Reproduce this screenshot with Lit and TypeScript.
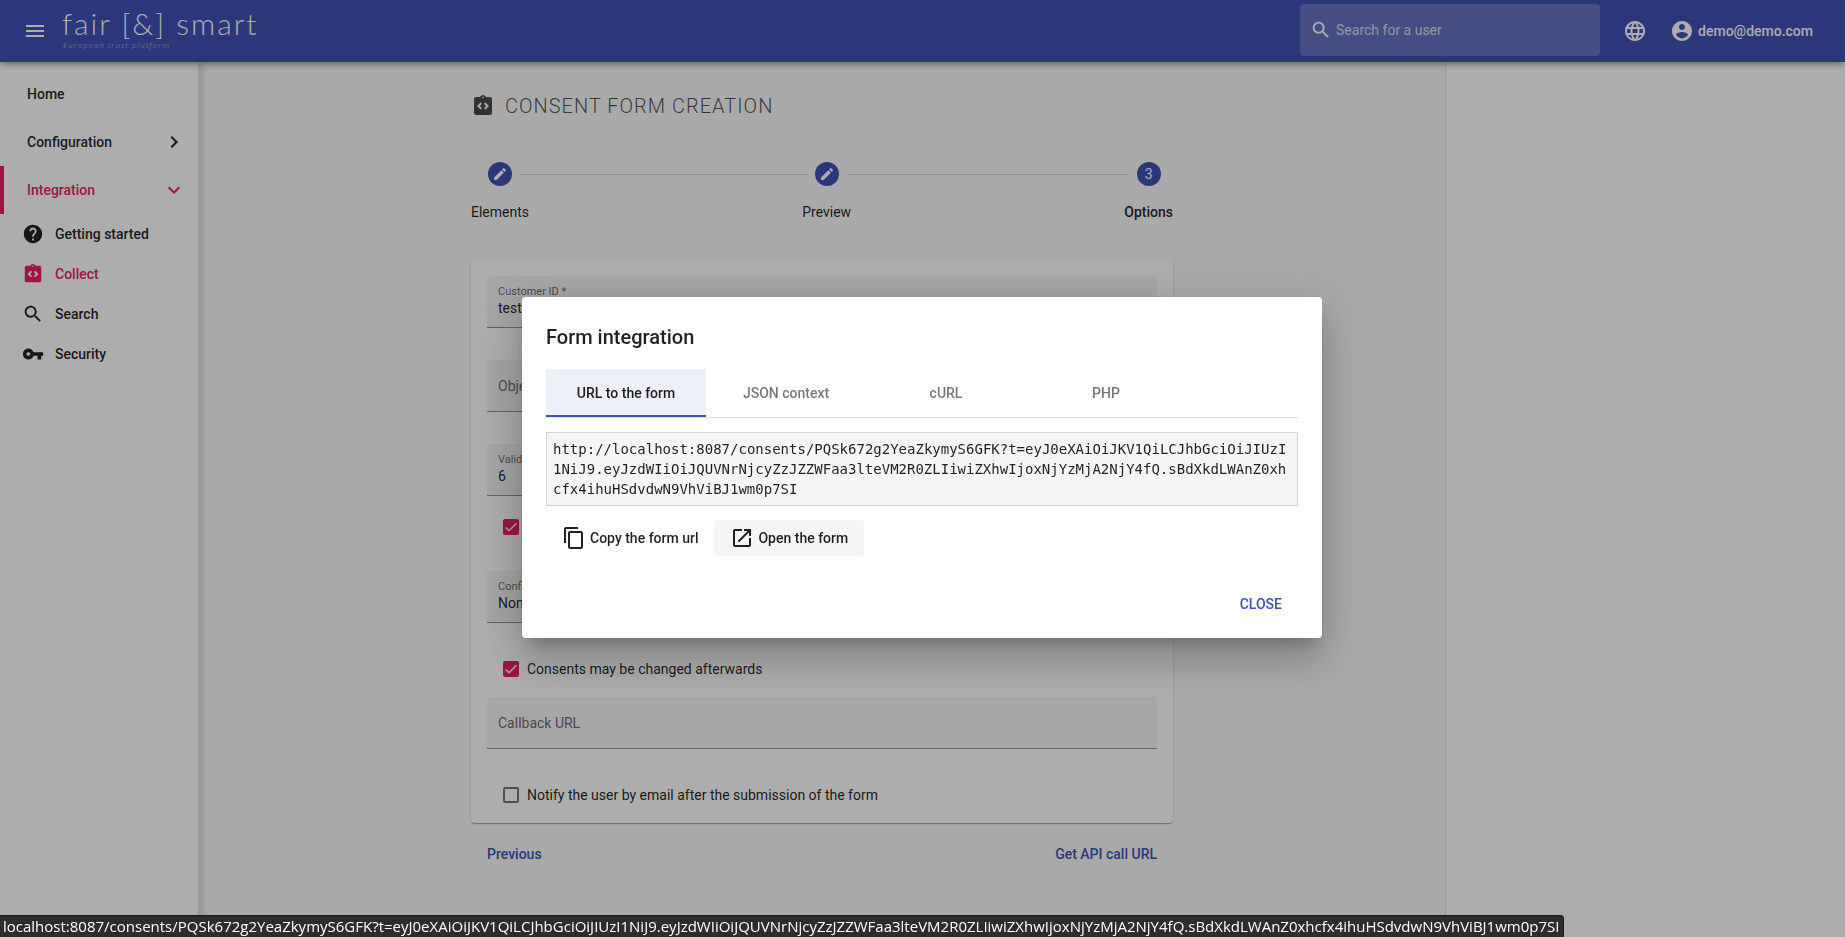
import { LitElement, html, css, svg } from "lit";
import { customElement, state } from "lit/decorators.js";
import { classMap } from "lit/directives/class-map.js";

const ICONS: Record<string, string> = {
  menu: "M3 18h18v-2H3v2zm0-5h18v-2H3v2zm0-7v2h18V6H3z",
  search:
    "M15.5 14h-.79l-.28-.27C15.41 12.59 16 11.11 16 9.5 16 5.91 13.09 3 9.5 3S3 5.91 3 9.5 5.91 16 9.5 16c1.61 0 3.09-.59 4.23-1.57l.27.28v.79l5 4.99L20.49 19l-4.99-5zm-6 0C7.01 14 5 11.99 5 9.5S7.01 5 9.5 5 14 7.01 14 9.5 11.99 14 9.5 14z",
  globe:
    "M11.99 2C6.47 2 2 6.48 2 12s4.47 10 9.99 10C17.52 22 22 17.52 22 12S17.52 2 11.99 2zm6.93 6h-2.95c-.32-1.25-.78-2.45-1.38-3.56 1.84.63 3.37 1.91 4.33 3.56zM12 4.04c.83 1.2 1.48 2.53 1.91 3.96h-3.82c.43-1.43 1.08-2.76 1.91-3.96zM4.26 14C4.1 13.36 4 12.69 4 12s.1-1.36.26-2h3.38c-.08.66-.14 1.32-.14 2s.06 1.34.14 2H4.26zm.82 2h2.95c.32 1.25.78 2.45 1.38 3.56-1.84-.63-3.37-1.9-4.33-3.56zm2.95-8H5.08c.96-1.66 2.49-2.93 4.33-3.56C8.81 5.55 8.35 6.75 8.03 8zM12 19.96c-.83-1.2-1.48-2.53-1.91-3.96h3.82c-.43 1.43-1.08 2.76-1.91 3.96zM14.34 14H9.66c-.09-.66-.16-1.32-.16-2s.07-1.35.16-2h4.68c.09.65.16 1.32.16 2s-.07 1.34-.16 2zm.25 5.56c.6-1.11 1.06-2.31 1.38-3.56h2.95c-.96 1.65-2.49 2.93-4.33 3.56zM16.36 14c.08-.66.14-1.32.14-2s-.06-1.34-.14-2h3.38c.16.64.26 1.31.26 2s-.1 1.36-.26 2h-3.38z",
  account:
    "M12 2C6.48 2 2 6.48 2 12s4.48 10 10 10 10-4.48 10-10S17.52 2 12 2zm0 3c1.66 0 3 1.34 3 3s-1.34 3-3 3-3-1.34-3-3 1.34-3 3-3zm0 14.2c-2.5 0-4.71-1.28-6-3.22.03-1.99 4-3.08 6-3.08 1.99 0 5.97 1.09 6 3.08-1.29 1.94-3.5 3.22-6 3.22z",
  right: "M10 6L8.59 7.41 13.17 12l-4.58 4.59L10 18l6-6z",
  down: "M16.59 8.59L12 13.17 7.41 8.59 6 10l6 6 6-6z",
  help: "M12 2C6.48 2 2 6.48 2 12s4.48 10 10 10 10-4.48 10-10S17.52 2 12 2zm1 17h-2v-2h2v2zm2.07-7.75l-.9.92C13.45 12.9 13 13.5 13 15h-2v-.5c0-1.1.45-2.1 1.17-2.83l1.24-1.26c.37-.36.59-.86.59-1.41 0-1.1-.9-2-2-2s-2 .9-2 2H8c0-2.21 1.79-4 4-4s4 1.79 4 4c0 .88-.36 1.68-.93 2.25z",
  form: "M19 3h-4.18C14.4 1.84 13.3 1 12 1s-2.4.84-2.82 2H5c-1.1 0-2 .9-2 2v14c0 1.1.9 2 2 2h14c1.1 0 2-.9 2-2V5c0-1.1-.9-2-2-2zM11 14.17L9.59 15.6 6 12l3.59-3.6L11 9.83 8.83 12 11 14.17zM12 4.25c-.41 0-.75-.34-.75-.75s.34-.75.75-.75.75.34.75.75-.34.75-.75.75zm2.41 11.35L13 14.17 15.17 12 13 9.83l1.41-1.43L18 12l-3.59 3.6z",
  key: "M12.65 10C11.83 7.67 9.61 6 7 6c-3.31 0-6 2.69-6 6s2.69 6 6 6c2.61 0 4.83-1.67 5.65-4H17v4h4v-4h2v-4H12.65zM7 14c-1.1 0-2-.9-2-2s.9-2 2-2 2 .9 2 2-.9 2-2 2z",
  edit: "M3 17.25V21h3.75L17.81 9.94l-3.75-3.75L3 17.25zM20.71 7.04c.39-.39.39-1.02 0-1.41l-2.34-2.34c-.39-.39-1.02-.39-1.41 0l-1.83 1.83 3.75 3.75 1.83-1.83z",
  copy: "M16 1H4c-1.1 0-2 .9-2 2v14h2V3h12V1zm3 4H8c-1.1 0-2 .9-2 2v14c0 1.1.9 2 2 2h11c1.1 0 2-.9 2-2V7c0-1.1-.9-2-2-2zm0 16H8V7h11v14z",
  open: "M19 19H5V5h7V3H5c-1.11 0-2 .9-2 2v14c0 1.1.89 2 2 2h14c1.1 0 2-.9 2-2v-7h-2v7zM14 3v2h3.59l-9.83 9.83 1.41 1.41L19 6.41V10h2V3h-7z",
};

const icon = (name: string, size = "") => html`
  <svg class="icon ${size}" viewBox="0 0 24 24" aria-hidden="true">
    ${svg`<path d=${ICONS[name]}></path>`}
  </svg>`;

const TOKEN_PATH =
  "localhost:8087/consents/PQSk672g2YeaZkymyS6GFK?t=eyJ0eXAiOiJKV1QiLCJhbGciOiJIUzI1NiJ9.eyJzdWIiOiJQUVNrNjcyZzJZZWFaa3lteVM2R0ZLIiwiZXhwIjoxNjYzMjA2NjY4fQ.sBdXkdLWAnZ0xhcfx4ihuHSdvdwN9VhViBJ1wm0p7SI";

const TABS = ["URL to the form", "JSON context", "cURL", "PHP"];

@customElement("app-root")
export class AppRoot extends LitElement {
  @state() private tab = 0;
  @state() private dialogOpen = true;

  static styles = css`
    :host {
      --primary: #3f51b5;
      --accent: #e91e63;
      display: flex;
      flex-direction: column;
      min-height: 100vh;
      font: 400 14px/20px Roboto, sans-serif;
      color: rgba(0, 0, 0, 0.87);
      background: #fafafa;
    }
    * {
      box-sizing: border-box;
    }
    button,
    input,
    select {
      font: inherit;
      color: inherit;
      border: 0;
      background: none;
      padding: 0;
      margin: 0;
      outline: 0;
    }
    a {
      color: inherit;
      text-decoration: none;
    }
    .icon {
      display: block;
      flex: none;
      width: 24px;
      height: 24px;
      fill: currentColor;
    }
    .icon.medium {
      width: 22px;
      height: 22px;
    }
    .icon.small {
      width: 16px;
      height: 16px;
    }

    .toolbar {
      display: flex;
      align-items: center;
      height: 62px;
      padding: 0 32px 0 23px;
      color: #fff;
      background: var(--primary);
      z-index: 2;
      box-shadow: 0 2px 4px -1px rgba(0, 0, 0, 0.2),
        0 4px 5px 0 rgba(0, 0, 0, 0.14), 0 1px 10px 0 rgba(0, 0, 0, 0.12);
    }
    .brand {
      display: flex;
      flex-direction: column;
      margin-left: 15px;
      padding-bottom: 4px;
    }
    .brand-name {
      font: 300 30px/32px Lato, sans-serif;
      letter-spacing: 2px;
    }
    .brand-tag {
      font: italic 300 8px/12px "Open Sans", sans-serif;
      letter-spacing: 1px;
      padding-left: 1px;
      opacity: 0.6;
    }
    .user-search {
      display: flex;
      align-items: center;
      gap: 4px;
      width: 300px;
      height: 52px;
      margin: 0 23px 2px auto;
      padding: 0 10px;
      border-radius: 4px;
      background: rgba(255, 255, 255, 0.2);
    }
    .user-search input {
      flex: 1;
      min-width: 0;
      opacity: 0.75;
    }
    .user-search input::placeholder {
      color: #fff;
      opacity: 1;
    }
    .account {
      display: flex;
      align-items: center;
      gap: 4px;
      margin-left: 23px;
      font-weight: 500;
    }

    .body {
      display: flex;
      flex: 1;
    }
    .sidebar {
      flex: none;
      width: 198px;
      padding-top: 8px;
      background: #fff;
      font-weight: 500;
      box-shadow: 6px 0 4px rgba(0, 0, 0, 0.1);
    }
    .nav-item {
      display: flex;
      align-items: center;
      justify-content: space-between;
      height: 48px;
      padding: 0 12px 0 23px;
      border-left: 4px solid transparent;
    }
    .nav-item.active {
      color: var(--accent);
      border-color: var(--accent);
    }
    .nav-sub {
      display: flex;
      align-items: center;
      gap: 11px;
      height: 40px;
      padding-left: 22px;
    }
    .nav-sub.active {
      color: var(--accent);
    }

    .main {
      flex: 1;
      min-width: 0;
      padding: 32px 24px 32px 25px;
    }
    .side-panel {
      flex: none;
      width: 400px;
      background: #fff;
      border-left: 1px solid rgba(0, 0, 0, 0.12);
    }
    .content {
      max-width: 702px;
      margin: 0 auto;
    }
    .title {
      display: flex;
      align-items: center;
      gap: 10px;
      margin: 0 0 44px;
      font: 300 20px/24px Roboto, sans-serif;
      letter-spacing: 1px;
      color: rgba(0, 0, 0, 0.7);
    }

    .stepper {
      display: flex;
    }
    .step {
      display: flex;
      flex-direction: column;
      gap: 16px;
    }
    .step.current {
      font-weight: 500;
    }
    .step-top {
      display: flex;
      align-items: center;
      gap: 8px;
      align-self: stretch;
    }
    .step-dot {
      display: grid;
      place-items: center;
      width: 24px;
      height: 24px;
      border-radius: 50%;
      color: #fff;
      background: var(--primary);
      font-weight: 400;
    }
    .line {
      flex: 1;
      height: 1px;
      background: rgba(0, 0, 0, 0.14);
    }
    .line.blank {
      background: none;
    }
    .stepper > .line {
      margin-top: 12px;
    }

    .card {
      display: flex;
      flex-direction: column;
      gap: 32px;
      margin-top: 38px;
      padding: 16px;
      border-radius: 4px;
      background: #fff;
      box-shadow: 0 2px 1px -1px rgba(0, 0, 0, 0.2),
        0 1px 1px 0 rgba(0, 0, 0, 0.14), 0 1px 3px 0 rgba(0, 0, 0, 0.12);
    }
    .group {
      display: flex;
      flex-direction: column;
      gap: 19px;
    }
    .group.check-first {
      gap: 16px;
      padding-top: 2px;
    }
    .field {
      display: flex;
      flex-direction: column;
      justify-content: center;
      height: 52px;
      padding: 0 11px;
      border-radius: 4px 4px 0 0;
      border-bottom: 1px solid rgba(0, 0, 0, 0.42);
      background: rgba(0, 0, 0, 0.04);
    }
    .field label {
      font-size: 11px;
      line-height: 12px;
      color: rgba(0, 0, 0, 0.6);
    }
    .field input,
    .field select {
      width: 100%;
      height: 20px;
      appearance: none;
    }
    .field input::placeholder {
      color: rgba(0, 0, 0, 0.6);
      opacity: 1;
    }
    .check {
      display: flex;
      align-items: center;
      gap: 8px;
      height: 24px;
      padding-left: 16px;
    }
    .check input {
      appearance: none;
      width: 16px;
      height: 16px;
      border: 2px solid rgba(0, 0, 0, 0.54);
      border-radius: 2px;
    }
    .check input:checked {
      border: 0;
      background: var(--accent)
        url("data:image/svg+xml,%3Csvg xmlns='http://www.w3.org/2000/svg' viewBox='0 0 24 24'%3E%3Cpath d='M4.1 12.7 9 17.6 20.3 6.3' fill='none' stroke='white' stroke-width='2.2'/%3E%3C/svg%3E")
        center / 16px no-repeat;
    }
    .card-actions {
      display: flex;
      justify-content: space-between;
      padding: 21px 16px;
      color: var(--primary);
      font-weight: 500;
    }
    .card-actions button,
    .close {
      font-weight: 500;
    }

    .backdrop {
      position: fixed;
      inset: 0;
      z-index: 10;
      display: flex;
      align-items: center;
      justify-content: center;
      padding: 0 1px 2px 0;
      background: rgba(0, 0, 0, 0.32);
    }
    .dialog {
      width: 800px;
      max-width: 80vw;
      padding: 24px 24px 16px;
      border-radius: 4px;
      background: #fff;
      box-shadow: 0 11px 15px -7px rgba(0, 0, 0, 0.2),
        0 24px 38px 3px rgba(0, 0, 0, 0.14), 0 9px 46px 8px rgba(0, 0, 0, 0.12);
    }
    .dialog-title {
      margin: 0 0 16px;
      font: 500 20px/32px Roboto, sans-serif;
    }
    .tabs {
      display: flex;
      border-bottom: 1px solid rgba(0, 0, 0, 0.12);
    }
    .tab {
      width: 160px;
      height: 48px;
      padding-top: 2px;
      border-bottom: 2px solid transparent;
      font-weight: 500;
      color: rgba(0, 0, 0, 0.54);
    }
    .tab.selected {
      color: rgba(0, 0, 0, 0.87);
      background: #eceef8;
      border-color: var(--primary);
    }
    .code {
      display: block;
      margin: 14px 0;
      padding: 6px;
      border: 1px solid #d3d3d3;
      background: #f5f5f5;
      font: 14px/20px "DejaVu Sans Mono", monospace;
      word-break: break-all;
    }
    .links {
      display: flex;
    }
    .link {
      display: flex;
      align-items: center;
      gap: 4px;
      height: 36px;
      padding: 0 16px;
      border-radius: 4px;
      font-weight: 500;
    }
    .link.hover {
      background: #f5f5f5;
    }
    .dialog-actions {
      display: flex;
      justify-content: flex-end;
      margin-top: 30px;
    }
    .close {
      height: 36px;
      padding: 0 16px;
      color: var(--primary);
    }

    .status {
      position: fixed;
      left: 0;
      bottom: 0;
      z-index: 11;
      height: 22px;
      padding: 0 4px 0 3px;
      border-top: 1px solid #1a1a1a;
      border-right: 1px solid #1a1a1a;
      border-radius: 0 4px 0 0;
      color: #fff;
      background: #2d2d2d;
      font: 15px/20px "Open Sans", sans-serif;
      white-space: nowrap;
    }
  `;

  private renderDialog() {
    return html`
      <div class="backdrop">
        <section class="dialog" role="dialog" aria-modal="true" aria-labelledby="dialog-title">
          <h2 class="dialog-title" id="dialog-title">Form integration</h2>
          <div class="tabs" role="tablist">
            ${TABS.map(
              (t, i) => html`<button
                role="tab"
                aria-selected=${i === this.tab}
                class=${classMap({ tab: true, selected: i === this.tab })}
                @click=${() => (this.tab = i)}
              >${t}</button>`
            )}
          </div>
          <code class="code">http://${TOKEN_PATH}</code>
          <div class="links">
            <button class="link">${icon("copy")}Copy the form url</button>
            <a class="link hover" href="http://${TOKEN_PATH}">${icon("open")}Open the form</a>
          </div>
          <div class="dialog-actions">
            <button class="close" @click=${() => (this.dialogOpen = false)}>CLOSE</button>
          </div>
        </section>
      </div>
      <div class="status">${TOKEN_PATH}</div>
    `;
  }

  render() {
    return html`
      <header class="toolbar">
        <button aria-label="Menu">${icon("menu")}</button>
        <a class="brand" href="#">
          <span class="brand-name">fair [&amp;] smart</span>
          <span class="brand-tag">European trust platform</span>
        </a>
        <label class="user-search">
          ${icon("search", "medium")}
          <input type="search" placeholder="Search for a user" aria-label="Search for a user" />
        </label>
        <button aria-label="Language">${icon("globe")}</button>
        <button class="account">${icon("account")}demo@demo.com</button>
      </header>

      <div class="body">
        <nav class="sidebar">
          <a class="nav-item" href="#">Home</a>
          <a class="nav-item" href="#">Configuration ${icon("right")}</a>
          <a class="nav-item active" href="#">Integration ${icon("down")}</a>
          <a class="nav-sub" href="#">${icon("help", "medium")}Getting started</a>
          <a class="nav-sub active" href="#">${icon("form", "medium")}Collect</a>
          <a class="nav-sub" href="#">${icon("search", "medium")}Search</a>
          <a class="nav-sub" href="#">${icon("key", "medium")}Security</a>
        </nav>

        <main class="main">
          <div class="content">
            <h1 class="title">${icon("form")}CONSENT FORM CREATION</h1>

            <div class="stepper">
              <div class="step">
                <div class="step-top">
                  <span class="line blank"></span>
                  <span class="step-dot">${icon("edit", "small")}</span>
                  <span class="line"></span>
                </div>
                Elements
              </div>
              <span class="line"></span>
              <div class="step">
                <div class="step-top">
                  <span class="line"></span>
                  <span class="step-dot">${icon("edit", "small")}</span>
                  <span class="line"></span>
                </div>
                Preview
              </div>
              <span class="line"></span>
              <div class="step current">
                <div class="step-top">
                  <span class="line"></span>
                  <span class="step-dot">3</span>
                  <span class="line blank"></span>
                </div>
                Options
              </div>
            </div>

            <form class="card">
              <div class="field">
                <label for="customer">Customer ID *</label>
                <input id="customer" type="text" value="test-" />
              </div>
              <div class="field">
                <input type="text" placeholder="Object" aria-label="Object" />
              </div>
              <div class="group">
                <div class="field">
                  <label for="validity">Validity</label>
                  <input id="validity" type="text" value="6" />
                </div>
                <div class="check">
                  <input type="checkbox" checked aria-label="Validity visible" />
                </div>
              </div>
              <div class="field">
                <label for="confirmation">Confirmation</label>
                <select id="confirmation"><option>None</option></select>
              </div>
              <div class="group check-first">
                <label class="check">
                  <input type="checkbox" checked />Consents may be changed afterwards
                </label>
                <div class="field">
                  <input type="url" placeholder="Callback URL" aria-label="Callback URL" />
                </div>
              </div>
              <div class="group check-first">
                <label class="check">
                  <input type="checkbox" />Notify the user by email after the submission of the form
                </label>
              </div>
            </form>

            <div class="card-actions">
              <button>Previous</button>
              <button @click=${() => (this.dialogOpen = true)}>Get API call URL</button>
            </div>
          </div>
        </main>
        <aside class="side-panel"></aside>
      </div>
      ${this.dialogOpen ? this.renderDialog() : ""}
    `;
  }
}
